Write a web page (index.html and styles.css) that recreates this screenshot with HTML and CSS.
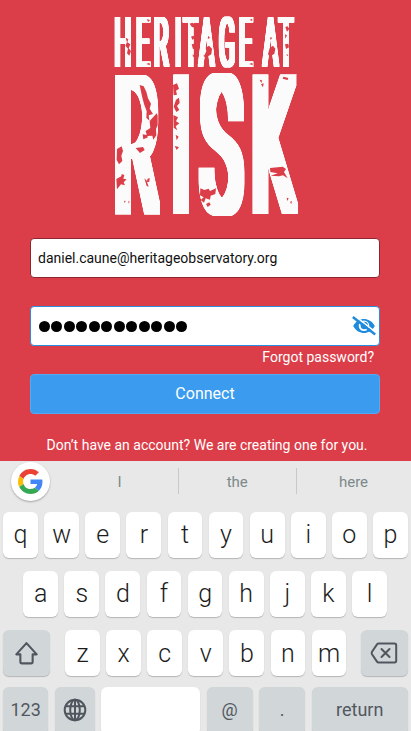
FILE: index.html
```html
<!DOCTYPE html>
<html lang="en">
<head>
<meta charset="utf-8">
<title>Heritage at Risk</title>
<link rel="stylesheet" href="styles.css">
</head>
<body>
<main class="login">
  <svg class="logo" viewBox="0 0 615 645" role="img" aria-label="Heritage at Risk">
    <defs>
      <filter id="inkSmall" filterUnits="userSpaceOnUse" x="0" y="0" width="615" height="220" color-interpolation-filters="sRGB">
        <feMorphology operator="dilate" radius="6 3"/>
        <feComponentTransfer><feFuncA type="linear" slope="1.7"/></feComponentTransfer>
      </filter>
      <filter id="inkLarge" filterUnits="userSpaceOnUse" x="0" y="190" width="615" height="455" color-interpolation-filters="sRGB">
        <feMorphology operator="dilate" radius="21 15"/>
        <feComponentTransfer result="fat"><feFuncA type="linear" slope="1.5"/></feComponentTransfer>
        <feTurbulence type="fractalNoise" baseFrequency="0.05" numOctaves="2" seed="7" result="noise"/>
        <feDisplacementMap in="fat" in2="noise" scale="4" xChannelSelector="R" yChannelSelector="G"/>
      </filter>
    </defs>
    <g filter="url(#inkSmall)">
      <text class="logo-small" transform="translate(3 184) scale(.34 1)" x="77 270 423 612 688 825 1000 1175 1390 1528">HERITAGEAT</text>
    </g>
    <g filter="url(#inkLarge)">
      <text class="logo-large" transform="translate(0 612) scale(.345 1)" x="97 592 850 1292">RISK</text>
    </g>
    <g class="wear">
      <path d="M62 98l8 5-3 9 9 6-5 12 7 8-5 14-7-7 3-14-8-9 5-10z"/>
      <path d="M254 56l8-3 10 6-4 9-8-3zM258 95l7-3 4 6-6 7zM260 118l10-2 2 12-8 5zM263 148l6 4-5 5z"/>
      <path d="M302 128l10-6 9 9-2 17-12 7-8-6 5-10zM310 92l5 7-7 3zM296 149l6 3-5 5z"/>
      <path d="M494 129l10-7 7 9-3 15-13 9-6-7zM496 96l6 3-6 6z"/>
      <path d="M541 66l7-2 5 8-7 8zM540 88l6 3-5 10zM540 118l10-2 2 11-9 5zM545 147l5 3-4 4z"/>
      <path d="M126 42l9 4-6 5zM124 177l9-4 2 8zM433 177l9-4 1 8zM434 45l7-4 1 7z"/>
      <path d="M104 240l12 4 8 16 5 20 9 16-4 15 10 16-13 4 2 16-9-9 1-20-7-18-6-22zM155 325l3 7 0 28-5 12 1 19-9 13-3-12-16 1-4-15 14-9-2-21zM113 388l12 2 4 7-14 6zM92 429l22-3 5 9-14 9z"/>
      <path d="M204 240l12-5 6 16-9 6 3 12-10 2zM213 284l9-6 2 16-8 9 7 12-9 6-8-16zM205 330l14 7-6 12 10 6-11 9 5 12-11-8zM212 389l9 6-6 11zM209 423l13 3-7 9z"/>
      <path d="M464 224l7 2-2 9zM468 238l8-3-2 12zM535 215l15 4-2 6-15-4z"/>
      <path d="M36 432l14-8 4 14-5 14 3 16-10 10-7-14zM34 522l15-8 1-7 8 3-3 11 10 2-9 9 4 9-12-3-12 15zM57 587l5 1-3 6zM70 587l4 3-3 6z"/>
      <path d="M118 520l8 8 2-7 6-2-1 11-7 1 5 14-6-2z"/>
      <path d="M286 550l12 5 13-4 4 7 18-8-2 17-14 5-2 12-13-4-5 13-10-8 9-8-11-6zM303 597l10-5 4 7-9 7z"/>
      <path d="M495 489l38-4 10 7-6 9 11 19-14-9-12 3-25-2 21-7-22-4zM545 578l6 2-4 8zM555 591l6-3-2 9z"/>
    </g>
  </svg>

  <form class="form">
    <div class="field">daniel.caune@heritageobservatory.org</div>
    <div class="field field-active">
      <span class="dots"><i></i><i></i><i></i><i></i><i></i><i></i><i></i><i></i><i></i><i></i><i></i><i></i></span>
      <svg class="eye" viewBox="0 0 24 20">
        <path d="M1.200 10C4 5 8 3 12 3S20 5 22.800 10C20 15 16 17 12 17S4 15 1.200 10z" fill="#1f8bdc"/>
        <circle cx="12" cy="9.800" r="5.300" fill="#fff"/>
        <circle cx="12.300" cy="9.500" r="3.700" fill="#1f8bdc"/>
        <path d="M2-.7 25 17.300" stroke="#fff" stroke-width="1.600"/>
        <path d="M.8 1 23.200 18.500" stroke="#1f8bdc" stroke-width="2.400"/>
      </svg>
    </div>
    <a class="forgot">Forgot password?</a>
    <button type="button" class="connect">Connect</button>
    <p class="signup">Don’t have an account? We are creating one for you.</p>
  </form>
</main>

<section class="keyboard">
  <div class="suggestions">
    <div class="google">
      <svg viewBox="0 0 48 48">
        <path fill="#ea4335" d="M24 9.500c3.540 0 6.710 1.220 9.210 3.600l6.850-6.850C35.900 2.380 30.470 0 24 0 14.620 0 6.510 5.380 2.560 13.220l7.980 6.190C12.430 13.720 17.740 9.500 24 9.500z"/>
        <path fill="#4285f4" d="M46.980 24.550c0-1.570-.15-3.090-.38-4.550H24v9.020h12.940c-.58 2.960-2.260 5.480-4.780 7.180l7.730 6c4.510-4.180 7.090-10.360 7.090-17.650z"/>
        <path fill="#fbbc05" d="M10.530 28.590c-.48-1.450-.76-2.990-.76-4.590s.27-3.140.76-4.590l-7.980-6.190C.92 16.460 0 20.120 0 24c0 3.880.92 7.540 2.560 10.780l7.970-6.190z"/>
        <path fill="#34a853" d="M24 48c6.480 0 11.930-2.130 15.890-5.810l-7.730-6c-2.150 1.450-4.920 2.300-8.160 2.300-6.260 0-11.570-4.220-13.470-9.910l-7.980 6.190C6.510 42.620 14.620 48 24 48z"/>
      </svg>
    </div>
    <span>I</span><span>the</span><span>here</span>
  </div>
  <div class="row"><b>q</b><b>w</b><b>e</b><b>r</b><b>t</b><b>y</b><b>u</b><b>i</b><b>o</b><b>p</b></div>
  <div class="row row-home"><b>a</b><b>s</b><b>d</b><b>f</b><b>g</b><b>h</b><b>j</b><b>k</b><b>l</b></div>
  <div class="row row-shift">
    <b class="special"><svg class="shift" viewBox="0 0 24 24"><path d="M12 2 2.200 12.800h3.900V20q0 1.500 1.500 1.500h8.800q1.500 0 1.500-1.500v-7.200h3.900z"/></svg></b>
    <b>z</b><b>x</b><b>c</b><b>v</b><b>b</b><b>n</b><b>m</b>
    <b class="special"><svg class="erase" viewBox="0 0 28 22"><path d="M8.600 1.500H24.500q1.700 0 1.700 1.700v15.600q0 1.700-1.700 1.700H8.600q-1 0-1.600-.9L2 12.200q-.7-1.200 0-2.400L7 2.400q.6-.9 1.600-.9zM11.500 7l8 8M19.500 7 11.500 15"/></svg></b>
  </div>
  <div class="row row-bottom">
    <b class="special">123</b>
    <b class="special"><svg class="globe" viewBox="0 0 24 24"><circle cx="12" cy="12" r="10.300"/><ellipse cx="12" cy="12" rx="4.800" ry="10.300"/><path d="M12 1.700v20.600M2.800 8.200h18.400M2.800 15.800h18.400"/></svg></b>
    <b></b>
    <b class="special">@</b>
    <b class="special">.</b>
    <b class="special">return</b>
  </div>
</section>
</body>
</html>
```
FILE: styles.css
```css
* { box-sizing: border-box; }
body {
  margin: 0;
  width: 411px;
  height: 731px;
  overflow: hidden;
  display: flex;
  flex-direction: column;
  font-family: Roboto, "Liberation Sans", sans-serif;
}
.login {
  height: 461px;
  padding: 5px 30px 0;
  background: #db3e49;
  display: flex;
  flex-direction: column;
  flex-shrink: 0;
}
.logo {
  width: 205px;
  height: 215px;
  margin-left: 75px;
  flex-shrink: 0;
}
.logo text { fill: #fbfbfb; font-family: Roboto, sans-serif; }
.logo-small { font-size: 200px; font-weight: 300; }
.logo-large { font-size: 547px; font-weight: 100; }
.wear { fill: #db3e49; }
.form {
  width: 350px;
  margin-top: 18px;
  display: flex;
  flex-direction: column;
}
.field {
  height: 40px;
  padding: 0 7px;
  border: 1px solid #8c2530;
  border-radius: 4px;
  background: #fff;
  color: #111;
  font-size: 14px;
  line-height: 38px;
}
.field-active {
  margin-top: 28px;
  padding-right: 3px;
  border-color: #2a8ee0;
  display: flex;
  align-items: center;
  justify-content: space-between;
}
.dots { display: flex; gap: 1.500px; padding-left: .8px; }
.dots i { width: 11px; height: 11px; border-radius: 50%; background: #000; }
.eye { width: 24px; height: 20px; }
.forgot {
  margin: 2px 6px 0 0;
  height: 18px;
  line-height: 18px;
  text-align: right;
  font-size: 14px;
  color: #fff;
}
.connect {
  margin: 8px 0 0;
  height: 40px;
  padding: 0 0 2px;
  border: 1px solid #55a9f1;
  border-radius: 4px;
  background: #3a9bef;
  color: #fff;
  font: 16px Roboto, sans-serif;
}
.signup {
  margin: 22px 0 0;
  padding-left: 4px;
  line-height: 18px;
  text-align: center;
  white-space: nowrap;
  font-size: 14px;
  color: #fff;
}
.keyboard {
  height: 270px;
  flex-shrink: 0;
  background: #e8e8e8;
  overflow: hidden;
}
.suggestions {
  height: 50.500px;
  display: grid;
  grid-template-columns: 50px 118px 117.500px 114px;
  padding-left: 11px;
}
.google {
  width: 39px;
  height: 39px;
  margin-top: 1px;
  border-radius: 50%;
  background: #fff;
  box-shadow: 0 1px 2px rgba(0, 0, 0, .3);
  display: flex;
  align-items: center;
  justify-content: center;
}
.google svg { width: 25px; height: 25px; }
.suggestions span {
  height: 26px;
  margin-top: 7px;
  line-height: 28px;
  text-align: center;
  font-size: 15px;
  color: #7c888c;
  border-right: 1px solid #c8c9ca;
}
.suggestions span:last-child { border: 0; }
.row {
  height: 46px;
  margin-bottom: 13.300px;
  padding: 0 3.200px;
  display: grid;
  grid-template-columns: repeat(10, 34.800px);
  column-gap: 6.300px;
}
.row b {
  display: flex;
  align-items: center;
  justify-content: center;
  background: #fff;
  border-radius: 6px;
  box-shadow: 0 1px 1px rgba(0, 0, 0, .22);
  font-size: 25px;
  font-weight: 300;
  color: #1c1c1c;
}
.row-home {
  padding-left: 23.300px;
  grid-template-columns: repeat(9, 34.800px);
}
.row-shift {
  margin-bottom: 11px;
  grid-template-columns: 55.600px repeat(7, 34.800px) 55.200px;
}
.row-shift .special { width: 46.800px; }
.row-shift .special:last-child { margin-left: 8.200px; }
.row-bottom {
  height: 48px;
  grid-template-columns: 45px 40px 99px 46px 46px 96px;
  column-gap: 6.500px;
}
.row .special {
  background: #d1d6d9;
  color: #51585f;
  font-size: 18px;
  font-weight: 400;
}
.row-bottom .special { padding-bottom: 3px; }
.special svg { fill: none; stroke: #50565e; stroke-width: 2; stroke-linejoin: round; stroke-linecap: round; }
.shift { width: 25px; height: 25px; }
.erase { width: 28px; height: 22px; }
.globe { width: 24px; height: 24px; }
```
